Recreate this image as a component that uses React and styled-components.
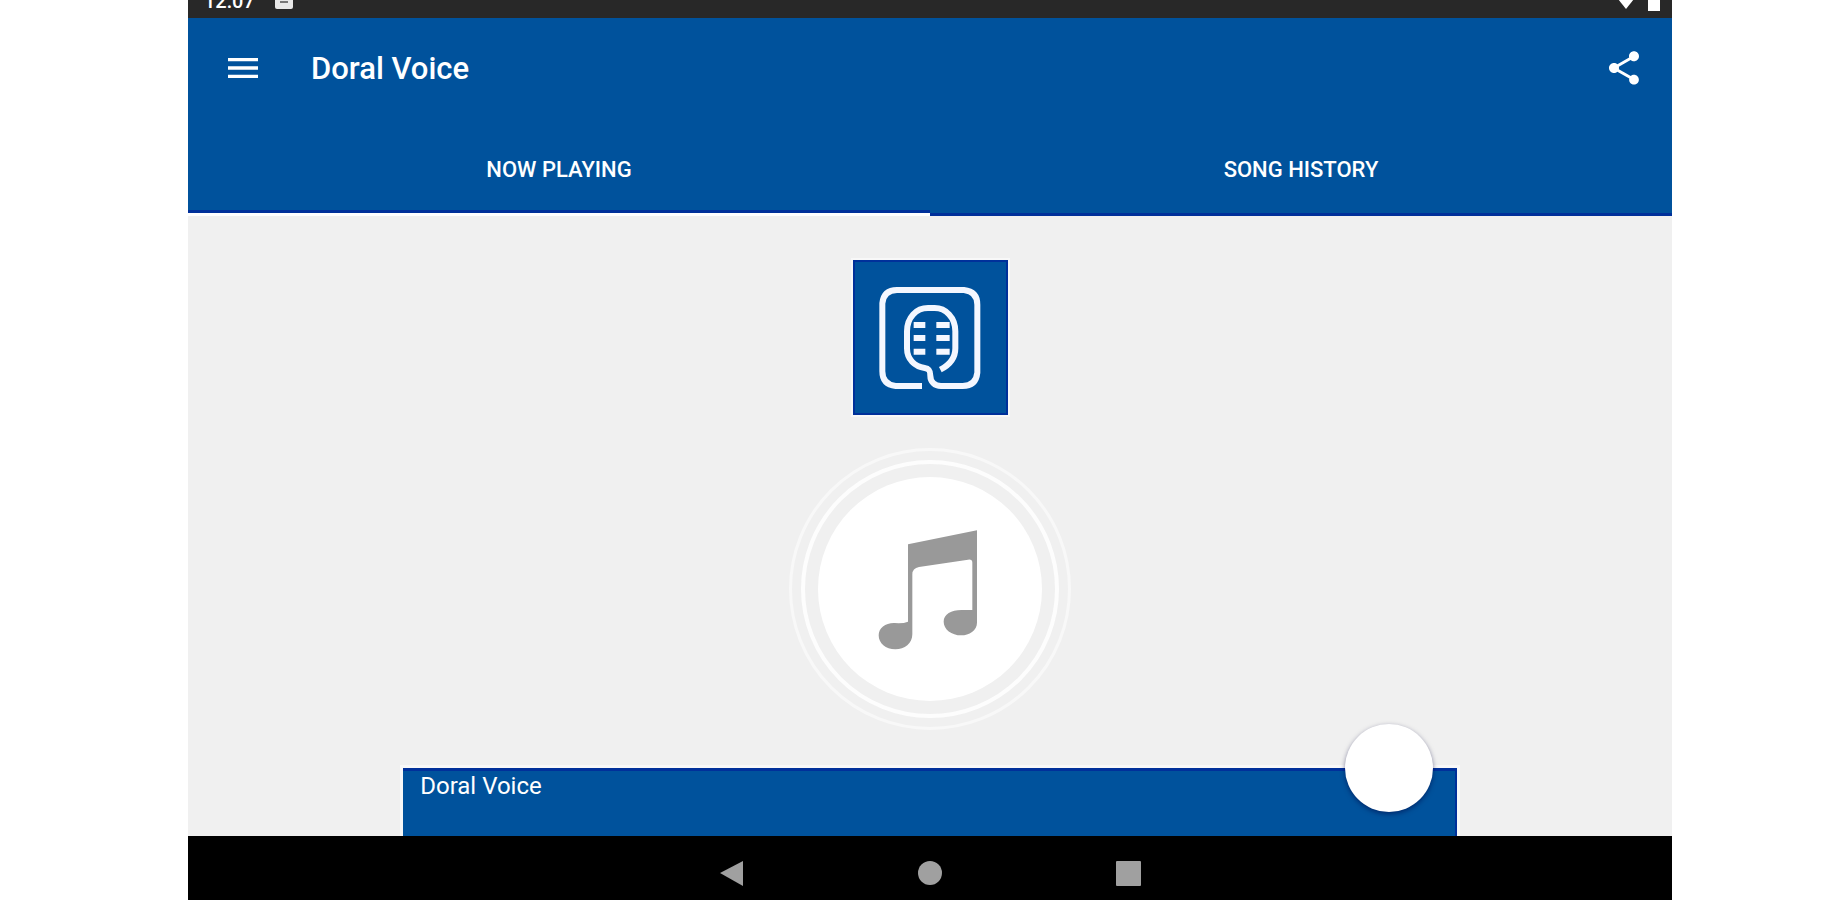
import React, { useState } from 'react';
import styled, { createGlobalStyle } from 'styled-components';
import { MdMenu, MdShare } from 'react-icons/md';

const GlobalStyle = createGlobalStyle`
  * {
    box-sizing: border-box;
  }
  body {
    margin: 0;
    background: #fff;
    font-family: Roboto, "Liberation Sans", sans-serif;
  }
  button {
    border: 0;
    padding: 0;
    background: none;
    color: inherit;
    font-family: inherit;
    cursor: pointer;
  }
  svg {
    display: block;
  }
`;

const Screen = styled.div`
  display: flex;
  flex-direction: column;
  min-height: 100vh;
  margin: 0 171px 0 188px;
  background: #f0f0f0;
`;

const StatusBar = styled.div`
  display: flex;
  justify-content: space-between;
  height: 18px;
  padding: 0 12px 0 16px;
  overflow: hidden;
  background: #282828;
  color: #fff;
`;

const StatusGroup = styled.div`
  display: flex;
  align-items: flex-end;
  gap: ${(props) => props.$gap};
  padding-bottom: ${(props) => props.$bottom};
`;

const Clock = styled.span`
  font-size: 20px;
  font-weight: 500;
  line-height: 16px;
`;

const Header = styled.header`
  background: #00529c;
  color: #fff;
`;

const Toolbar = styled.div`
  display: flex;
  align-items: center;
  height: 100px;
  padding: 0 28px 0 35px;
`;

const Title = styled.h1`
  flex: 1;
  margin: 0 0 0 48px;
  padding-top: 2px;
  font-size: 31px;
  font-weight: 500;
  line-height: 40px;
`;

const IconButton = styled.button`
  width: 40px;
  height: 40px;
  font-size: 40px;
`;

const Tabs = styled.div`
  display: flex;
`;

const Tab = styled.button`
  flex: 1;
  height: 98px;
  padding-top: 8px;
  border-bottom: ${(props) => (props.$active ? '3px solid #fff' : '3px solid #00309a')};
  box-shadow: ${(props) => (props.$active ? 'inset 0 -3px #00309a' : 'none')};
  font-size: 22px;
  font-weight: 500;
  line-height: 28px;
  text-transform: uppercase;
`;

const Player = styled.main`
  display: flex;
  flex: 1;
  flex-direction: column;
  align-items: center;
  padding-top: 44px;
`;

const Logo = styled.div`
  width: 155px;
  height: 155px;
  background: #00529c;
  box-shadow: inset 0 0 0 2px #00309a, 0 0 0 2px #f8f8f8;
`;

const Ring = styled.div`
  display: flex;
  align-items: center;
  justify-content: center;
  width: ${(props) => props.$size};
  height: ${(props) => props.$size};
  border: ${(props) => props.$line};
  border-radius: 50%;
`;

const Artwork = styled.div`
  margin: 33px 0 38px;
`;

const Disc = styled.div`
  width: 224px;
  height: 224px;
  border-radius: 50%;
  background: #fff;
`;

const TrackCard = styled.section`
  position: relative;
  flex: 1;
  width: 71%;
  padding: 3px 17px;
  border: solid #00309a;
  border-width: 3px 2px 0 0;
  background: #00529c;
  box-shadow: 0 0 0 3px #f8f8f8;
  color: #fff;
`;

const TrackName = styled.p`
  margin: 0;
  font-size: 24px;
  line-height: 24px;
`;

const PlayButton = styled.button`
  position: absolute;
  top: -47px;
  right: 22px;
  width: 88px;
  height: 88px;
  border-radius: 50%;
  background: #fff;
  box-shadow: 0 2px 5px rgba(0, 0, 60, 0.5);
`;

const NavBar = styled.nav`
  position: relative;
  display: flex;
  align-items: center;
  justify-content: center;
  gap: 158px;
  height: 64px;
  padding-top: 12px;
  background: #000;
  color: #a0a0a0;
`;

const MicLogo = () => (
  <svg viewBox="0 0 465 465" width="155" height="155" fill="none" stroke="#f4f7ff" strokeWidth="18">
    <path d="M207 378H128Q88 374 88 334V130Q92 90 132 90H333Q373 94 373 134V338Q369 378 329 378H264C245 378 232 365 232 347C232 335 230 326 215 324C185 320 162 298 162 265V214C162 172 190 144 225 144H245C278 144 307 172 307 214V265C307 295 290 315 262 329" />
    <path d="M182 195H217M182 234H217M182 275H217M250 195H290M250 234H290M250 275H290" />
  </svg>
);

const MusicNote = () => (
  <svg viewBox="0 0 672 672" width="224" height="224" fill="#999">
    <path
      transform="translate(-115 -138)"
      d="M385 340L592 298V575C592 598 568 613 545 613C515 613 492 595 492 572C492 550 515 537 545 537H578V395Q578 384 565 386L418 408Q398 412 398 430V610C398 638 375 655 347 655C318 655 297 637 297 613C297 590 318 575 345 576Q370 578 385 572Z"
    />
  </svg>
);

const tabs = ['Now playing', 'Song history'];

const App = () => {
  const [active, setActive] = useState(0);

  return (
    <>
      <GlobalStyle />
      <Screen>
        <StatusBar>
          <StatusGroup $gap="20px" $bottom="9px">
            <Clock>12:07</Clock>
            <svg width="18" height="18" viewBox="0 0 18 18" fill="#e8e8e8">
              <path d="M3 0H15L18 3V16Q18 18 16 18H2Q0 18 0 16V3Z" />
              <path d="M5 10H13V12H5Z" fill="#777" />
            </svg>
          </StatusGroup>
          <StatusGroup $gap="10px" $bottom="7px">
            <svg width="24" height="22" viewBox="0 0 24 22" fill="#fff">
              <path d="M0 5Q12-5 24 5L12 20Z" />
            </svg>
            <svg width="12" height="22" viewBox="0 0 12 22" fill="#fff">
              <path d="M0 3H4V0H8V3H12V22H0Z" />
            </svg>
          </StatusGroup>
        </StatusBar>
        <Header>
          <Toolbar>
            <IconButton aria-label="Menu">
              <MdMenu />
            </IconButton>
            <Title>Doral Voice</Title>
            <IconButton aria-label="Share">
              <MdShare />
            </IconButton>
          </Toolbar>
          <Tabs role="tablist">
            {tabs.map((tab, i) => (
              <Tab key={tab} role="tab" aria-selected={i === active} $active={i === active} onClick={() => setActive(i)}>
                {tab}
              </Tab>
            ))}
          </Tabs>
        </Header>
        <Player>
          <Logo>
            <MicLogo />
          </Logo>
          <Artwork>
            <Ring $size="282px" $line="3px solid #f8f8f8">
              <Ring $size="258px" $line="4px solid #fdfdfd">
                <Disc>
                  <MusicNote />
                </Disc>
              </Ring>
            </Ring>
          </Artwork>
          <TrackCard>
            <TrackName>Doral Voice</TrackName>
            <PlayButton aria-label="Play" />
          </TrackCard>
        </Player>
        <NavBar>
          <IconButton aria-label="Back">
            <svg width="40" height="40" viewBox="0 0 40 40" fill="currentColor">
              <path d="M8 19L31 7V32Z" />
            </svg>
          </IconButton>
          <IconButton aria-label="Home">
            <svg width="40" height="40" viewBox="0 0 40 40" fill="currentColor">
              <circle cx="20" cy="19" r="12" />
            </svg>
          </IconButton>
          <IconButton aria-label="Recent apps">
            <svg width="40" height="40" viewBox="0 0 40 40" fill="currentColor">
              <rect x="8" y="7" width="25" height="25" rx="1" />
            </svg>
          </IconButton>
        </NavBar>
      </Screen>
    </>
  );
};

export default App;
